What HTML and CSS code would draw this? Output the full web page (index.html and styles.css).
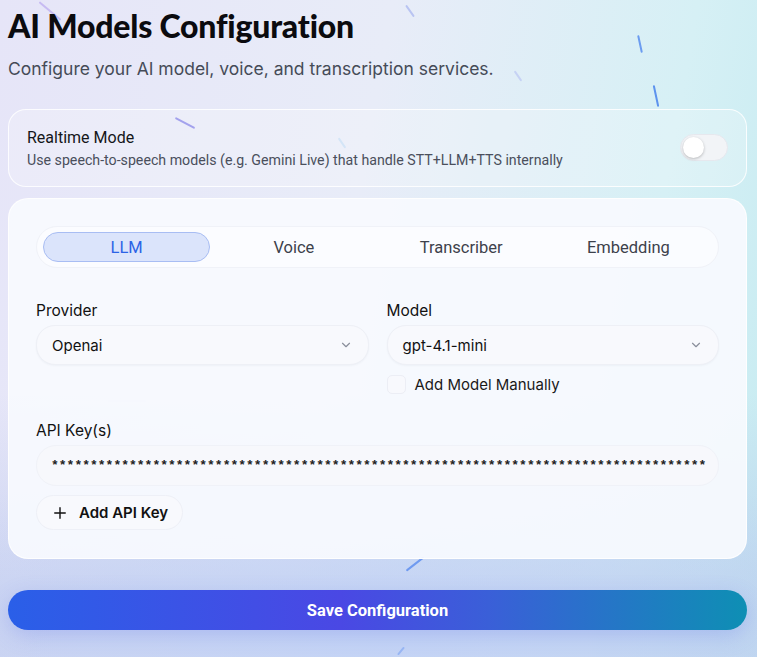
FILE: index.html
```html
<!DOCTYPE html>
<html lang="en">
<head>
    <meta charset="UTF-8">
    <meta name="viewport" content="width=device-width, initial-scale=1.0">
    <title>AI Models Configuration</title>
    <link rel="stylesheet" href="styles.css">
</head>
<body>
    <!-- floating streaks in the backdrop -->
    <div class="streaks">
        <span class="streak s1"></span>
        <span class="streak s2"></span>
        <span class="streak s3"></span>
        <span class="streak s4"></span>
        <span class="streak s5"></span>
        <span class="streak s6"></span>
        <span class="streak s7"></span>
        <span class="streak s8"></span>
        <span class="streak s9"></span>
        <span class="streak s10"></span>
    </div>

    <div class="page">
        <h1>AI Models Configuration</h1>
        <p class="subtitle">Configure your AI model, voice, and transcription services.</p>

        <div class="realtime">
            <div>
                <div class="realtime-title">Realtime Mode</div>
                <div class="realtime-desc">Use speech-to-speech models (e.g. Gemini Live) that handle STT+LLM+TTS internally</div>
            </div>
            <div class="toggle"><span class="knob"></span></div>
        </div>

        <div class="card">
            <div class="tabs">
                <button class="tab active">LLM</button>
                <button class="tab">Voice</button>
                <button class="tab">Transcriber</button>
                <button class="tab">Embedding</button>
            </div>

            <div class="row">
                <div class="field">
                    <label>Provider</label>
                    <div class="select">
                        <span>Openai</span>
                        <svg width="14" height="14" viewBox="0 0 24 24" fill="none" stroke="#8a8f9c" stroke-width="2" stroke-linecap="round" stroke-linejoin="round"><path d="M6 9l6 6 6-6"/></svg>
                    </div>
                </div>
                <div class="field">
                    <label>Model</label>
                    <div class="select">
                        <span>gpt-4.1-mini</span>
                        <svg width="14" height="14" viewBox="0 0 24 24" fill="none" stroke="#8a8f9c" stroke-width="2" stroke-linecap="round" stroke-linejoin="round"><path d="M6 9l6 6 6-6"/></svg>
                    </div>
                    <div class="check">
                        <span class="box"></span>
                        <span>Add Model Manually</span>
                    </div>
                </div>
            </div>

            <div class="field keys">
                <label>API Key(s)</label>
                <div class="input"><span class="masked">************************************************************************************</span></div>
            </div>

            <button class="add-key">
                <svg width="14" height="14" viewBox="0 0 24 24" fill="none" stroke="#111" stroke-width="2.4" stroke-linecap="round"><path d="M12 3v18M3 12h18"/></svg>
                Add API Key
            </button>
        </div>

        <button class="save">Save Configuration</button>
    </div>
</body>
</html>
```

FILE: styles.css
```css
html, body {
    height: 100%;
}

body {
    margin: 0;
    font-family: Inter, "Noto Sans", sans-serif;
    color: #111;
    background:
        radial-gradient(ellipse 70% 35% at 50% 100%, rgba(196, 212, 246, 0.9), rgba(196, 212, 246, 0) 100%),
        linear-gradient(180deg, rgba(255, 255, 255, 0) 60%, rgba(182, 196, 236, 0.55) 90%),
        linear-gradient(100deg, #e6e5f8 0%, #e8ecf8 45%, #d6f0f5 80%, #c6ebf1 100%);
    overflow: hidden;
    position: relative;
}

.page {
    position: relative;
    padding: 6px 10px 0 8px;
}

h1 {
    margin: 0;
    font-family: Lato, sans-serif;
    font-weight: 900;
    font-size: 32px;
    line-height: 40px;
    letter-spacing: -0.2px;
    color: #0b0b0f;
}

.subtitle {
    margin: 10px 0 0;
    font-size: 17.5px;
    line-height: 26px;
    color: #454b57;
}

.realtime {
    margin-top: 27px;
    height: 78px;
    box-sizing: border-box;
    padding: 0 18px;
    display: flex;
    align-items: center;
    justify-content: space-between;
    border: 1px solid rgba(255, 255, 255, 0.85);
    border-radius: 18px;
    background: rgba(255, 255, 255, 0.22);
}

.realtime-title {
    font-family: Roboto, sans-serif;
    font-size: 16px;
    color: #15161a;
    margin-top: -1px;
}

.realtime-desc {
    font-family: Roboto, sans-serif;
    font-size: 14.2px;
    color: #4a4f5c;
    margin-top: 5px;
}

.toggle {
    width: 48px;
    height: 27px;
    border-radius: 14px;
    background: #f2f4f7;
    border: 1px solid #e6e8ee;
    box-sizing: border-box;
    position: relative;
    margin-top: -2px;
}

.knob {
    position: absolute;
    left: 2px;
    top: 2px;
    width: 21px;
    height: 21px;
    border-radius: 50%;
    background: #fff;
    box-shadow: 0 1px 3px rgba(0, 0, 0, 0.25);
}

.card {
    margin-top: 11px;
    padding: 27px 27px 28px;
    border-radius: 20px;
    background: rgba(248, 250, 254, 0.93);
    border: 1px solid rgba(255, 255, 255, 0.9);
}

.tabs {
    display: grid;
    grid-template-columns: repeat(4, 1fr);
    padding: 5px 6px;
    border-radius: 22px;
    background: rgba(255, 255, 255, 0.5);
    border: 1px solid #f0f2f8;
}

.tab {
    height: 30px;
    border: 1px solid transparent;
    border-radius: 16px;
    background: none;
    font-family: Roboto, sans-serif;
    font-size: 16.5px;
    color: #3d414b;
    padding: 0;
}

.tab.active {
    background: #dbe4fb;
    border-color: #a8bdf3;
    color: #2b63e6;
}

.row {
    display: grid;
    grid-template-columns: 1fr 1fr;
    gap: 18px;
    margin-top: 34px;
}

.field label {
    display: block;
    font-size: 15.5px;
    line-height: 18px;
    color: #111;
}

.select {
    margin-top: 5px;
    height: 38px;
    border-radius: 19px;
    background: #f8f9fd;
    border: 1px solid #eef0f6;
    box-shadow: 0 1px 2px rgba(30, 40, 80, 0.04);
    display: flex;
    align-items: center;
    justify-content: space-between;
    padding: 0 15px;
    font-size: 15px;
}

.check {
    display: flex;
    align-items: center;
    gap: 9px;
    margin-top: 10px;
    font-size: 15px;
    color: #1a1a1a;
}

.box {
    width: 17px;
    height: 17px;
    border-radius: 5px;
    background: #f8f9fd;
    border: 1px solid #eceef5;
}

.keys {
    margin-top: 28px;
}

.input {
    margin-top: 5px;
    height: 39px;
    border-radius: 20px;
    background: #f7f8fc;
    border: 1px solid #f0f2f8;
    display: flex;
    align-items: center;
    padding: 0 14px;
    overflow: hidden;
}

.masked {
    font-family: "Liberation Mono", monospace;
    font-size: 13px;
    font-weight: bold;
    color: #222;
    white-space: nowrap;
}

.add-key {
    margin-top: 9px;
    height: 35px;
    padding: 0 14px 0 16px;
    border-radius: 18px;
    border: 1px solid #eef0f7;
    background: #f8f9fd;
    display: flex;
    align-items: center;
    gap: 12px;
    font-family: Inter, sans-serif;
    font-weight: 600;
    font-size: 15px;
    color: #111;
}

.save {
    display: block;
    width: 100%;
    margin-top: 31px;
    height: 40px;
    border: none;
    border-radius: 20px;
    background: linear-gradient(90deg, #2a5fe8 0%, #4a48e4 45%, #3a5fd8 65%, #0e8fb4 100%);
    color: #fff;
    font-family: Roboto, sans-serif;
    font-weight: 700;
    font-size: 16.5px;
    box-shadow: 0 6px 20px rgba(90, 110, 230, 0.25);
}

/* backdrop decoration */
.streaks {
    position: absolute;
    inset: 0;
    pointer-events: none;
}

.streak {
    position: absolute;
    height: 2px;
    border-radius: 2px;
    background: #7aa6f2;
}

.s1 { left: 36px; top: 10px; width: 28px; transform: rotate(40deg); background: #b9a8f0; opacity: 0.7; }
.s2 { left: 403px; top: 10px; width: 14px; transform: rotate(55deg); background: #b9c4f2; }
.s3 { left: 631px; top: 43px; width: 18px; transform: rotate(78deg); background: #6b9cf0; }
.s4 { left: 645px; top: 95px; width: 22px; transform: rotate(78deg); background: #5d93ee; }
.s5 { left: 512px; top: 75px; width: 12px; transform: rotate(55deg); background: #c6d2f4; }
.s6 { left: 174px; top: 122px; width: 22px; transform: rotate(28deg); background: #8a88e8; }
.s7 { left: 404px; top: 563px; width: 22px; transform: rotate(-38deg); background: #6f9af0; }
.s8 { left: 108px; top: 400px; width: 38px; background: #dfe5fa; }
.s9 { left: 396px; top: 650px; width: 10px; transform: rotate(-50deg); background: #9ab8f4; }
.s10 { left: 336px; top: 142px; width: 12px; transform: rotate(55deg); background: #c8def5; }
```
